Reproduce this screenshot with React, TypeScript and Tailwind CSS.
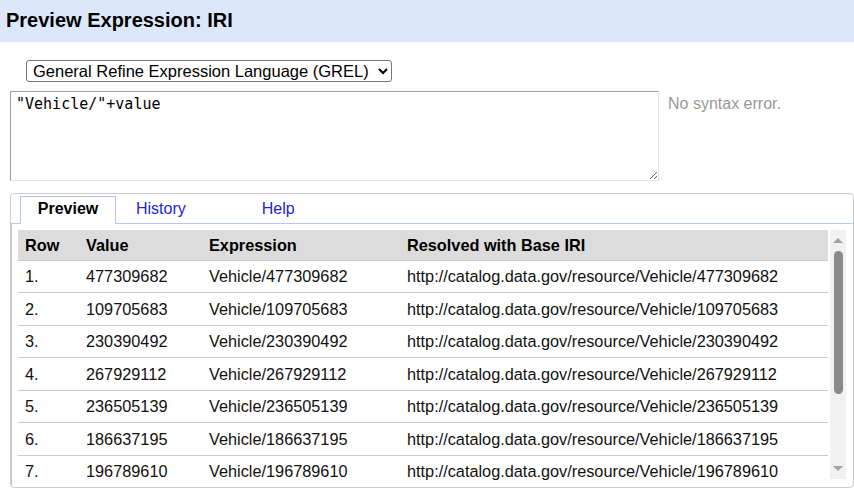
import React, { useState } from "react";

const rows = [
  "477309682",
  "109705683",
  "230390492",
  "267929112",
  "236505139",
  "186637195",
  "196789610",
];

const BASE = "http://catalog.data.gov/resource/";

const App: React.FC = () => {
  const [tab, setTab] = useState("Preview");
  const [expr, setExpr] = useState('"Vehicle/"+value');

  return (
    <div className="w-[854px] h-[500px] bg-white overflow-hidden font-['Liberation_Sans',Arial,sans-serif] text-black">
      {/* Title bar */}
      <div className="h-[42px] bg-[#dce8fa] flex items-center pl-[6px]">
        <h1 className="text-[20px] font-bold leading-none -mt-[2px]">Preview Expression: IRI</h1>
      </div>

      {/* Language + expression */}
      <div className="pl-[26px] pt-[18px]">
        <select
          defaultValue="grel"
          className="h-[22px] w-[366px] border border-[#767676] rounded-[3px] text-[16.5px] px-[2px] font-['Liberation_Sans',Arial,sans-serif] bg-white"
        >
          <option value="grel">General Refine Expression Language (GREL)</option>
          <option value="clojure">Clojure</option>
        </select>
      </div>
      <div className="flex pl-[10px] pt-[7px]">
        <textarea
          value={expr}
          onChange={(e) => setExpr(e.target.value)}
          className="w-[649px] h-[90px] border border-t-[#a0a0a0] border-l-[#a0a0a0] border-r-[#e3e3e3] border-b-[#e3e3e3] px-[5px] py-[3px] text-[15px] leading-[18px] font-['DejaVu_Sans_Mono',monospace] outline-none"
        />
        <div className="pl-[9px] pt-[1px] text-[16px] text-[#999999]">No syntax error.</div>
      </div>

      {/* Tabs */}
      <div className="ml-[10px] mt-[12px] w-[844px] h-[295px] border border-[#cccccc] rounded-[4px] pt-[1px] overflow-hidden">
        <div className="flex items-end h-[28px] pl-[9px]">
          {["Preview", "History", "Help"].map((t, i) => (
            <button
              key={t}
              onClick={() => setTab(t)}
              className={
                tab === t
                  ? "h-[28px] w-[96px] pb-[3px] border border-b-0 border-[#b4c6f2] bg-white font-bold text-[16px] text-black -mb-px relative z-10" +
                    (i === 0 ? "" : " ml-[10px]")
                  : "h-[28px] pb-[1px] text-[16px] text-[#2424d8] " +
                    (i === 1 ? "ml-[20px]" : i === 2 ? "ml-[76px]" : "")
              }
            >
              {t}
            </button>
          ))}
        </div>
        <div className="border border-[#b4c6f2] border-r-0 border-b-0 h-[272px] pl-[6px] pt-[6px] flex">
          {tab === "Preview" ? (
            <>
              <div className="w-[810px] h-[252px] overflow-hidden">
                <table className="w-full text-[16.3px] border-collapse">
                  <thead>
                    <tr className="bg-[#dcdcdc] h-[30px] text-left">
                      <th className="pl-[7px] w-[68px] font-bold">Row</th>
                      <th className="w-[123px] font-bold">Value</th>
                      <th className="w-[198px] font-bold">Expression</th>
                      <th className="font-bold">Resolved with Base IRI</th>
                    </tr>
                  </thead>
                  <tbody>
                    {rows.map((v, i) => (
                      <tr key={v} className="h-[32.5px] border-t border-[#cccccc] text-[#111]">
                        <td className="pl-[7px]">{i + 1}.</td>
                        <td>{v}</td>
                        <td>Vehicle/{v}</td>
                        <td>
                          {BASE}Vehicle/{v}
                        </td>
                      </tr>
                    ))}
                  </tbody>
                </table>
              </div>
              {/* scrollbar */}
              <div className="ml-[2px] w-[16px] h-[249px] bg-[#f1f1f1] flex flex-col items-center">
                <svg width="16" height="16" viewBox="0 0 16 16" className="mt-[2px]">
                  <path d="M3 11 L8 6 L13 11 Z" fill="#a3a3a3" />
                </svg>
                <div className="mt-[3px] w-[9px] h-[143px] rounded-full bg-[#8a8a8a]" />
                <div className="flex-1" />
                <svg width="16" height="16" viewBox="0 0 16 16" className="mb-[2px]">
                  <path d="M3 5 L8 10 L13 5 Z" fill="#a3a3a3" />
                </svg>
              </div>
            </>
          ) : (
            <div className="text-[16px] text-[#666] p-2">{tab} will appear here.</div>
          )}
        </div>
      </div>
    </div>
  );
};

export default App;
